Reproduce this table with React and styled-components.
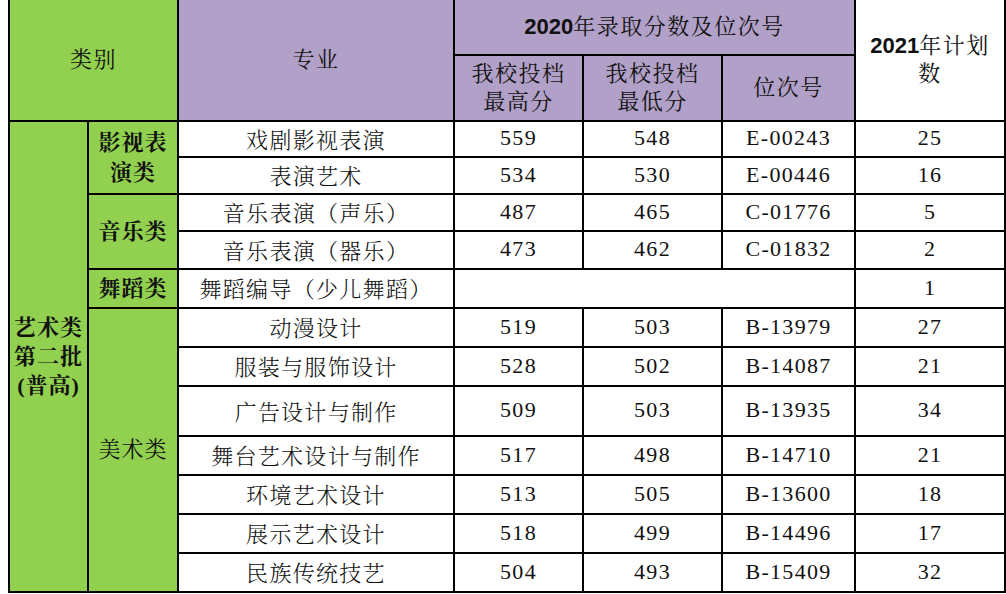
import React from 'react';
import styled, { createGlobalStyle } from 'styled-components';

const GREEN = '#92d050';
const PURPLE = '#b1a0c7';
const LINE = '2px solid #000';

const PageStyle = createGlobalStyle`
  body {
    margin: 0;
    background: #fff;
  }
`;

const Sheet = styled.table`
  margin-left: 8px;
  border-collapse: collapse;
  table-layout: fixed;
  width: 997px;
  color: #111;
  font-family: "Liberation Serif", "Noto Serif CJK SC", "Noto Sans CJK SC", serif;
`;

const Row = styled.tr`
  height: ${({ $h }) => $h}px;
`;

const HeadCell = styled.th`
  border: ${LINE};
  border-top: none;
  padding: 0;
  background: ${({ $tone }) => ($tone === 'green' ? GREEN : $tone === 'purple' ? PURPLE : '#fff')};
  font-size: 22px;
  font-weight: 400;
  line-height: 28px;
  letter-spacing: 1.5px;
  text-align: center;
  vertical-align: middle;
`;

const BoldNum = styled.span`
  font-family: "Liberation Sans", Arial, sans-serif;
  font-weight: 700;
  letter-spacing: 0;
`;

const GroupCell = styled.td`
  border: ${LINE};
  padding: 0;
  background: ${GREEN};
  font-size: 22px;
  font-weight: ${({ $bold }) => ($bold ? 700 : 400)};
  line-height: ${({ $lh }) => $lh || 30}px;
  letter-spacing: 1px;
  text-align: center;
  vertical-align: middle;
`;

const DataCell = styled.td`
  border: ${LINE};
  padding: 0 0 2px;
  background: #fff;
  font-size: 22px;
  font-weight: 300;
  letter-spacing: 1.3px;
  text-align: center;
  vertical-align: middle;
  white-space: nowrap;
`;

const groups = [
  {
    name: ['影视表', '演类'],
    bold: true,
    items: [
      { major: '戏剧影视表演', hi: '559', lo: '548', rank: 'E-00243', plan: '25', h: 36 },
      { major: '表演艺术', hi: '534', lo: '530', rank: 'E-00446', plan: '16', h: 37 },
    ],
  },
  {
    name: ['音乐类'],
    bold: true,
    items: [
      { major: '音乐表演（声乐）', hi: '487', lo: '465', rank: 'C-01776', plan: '5', h: 37 },
      { major: '音乐表演（器乐）', hi: '473', lo: '462', rank: 'C-01832', plan: '2', h: 38 },
    ],
  },
  {
    name: ['舞蹈类'],
    bold: true,
    items: [{ major: '舞蹈编导（少儿舞蹈）', empty: true, plan: '1', h: 39 }],
  },
  {
    name: ['美术类'],
    bold: false,
    items: [
      { major: '动漫设计', hi: '519', lo: '503', rank: 'B-13979', plan: '27', h: 39 },
      { major: '服装与服饰设计', hi: '528', lo: '502', rank: 'B-14087', plan: '21', h: 39 },
      { major: '广告设计与制作', hi: '509', lo: '503', rank: 'B-13935', plan: '34', h: 50 },
      { major: '舞台艺术设计与制作', hi: '517', lo: '498', rank: 'B-14710', plan: '21', h: 39 },
      { major: '环境艺术设计', hi: '513', lo: '505', rank: 'B-13600', plan: '18', h: 39 },
      { major: '展示艺术设计', hi: '518', lo: '499', rank: 'B-14496', plan: '17', h: 39 },
      { major: '民族传统技艺', hi: '504', lo: '493', rank: 'B-15409', plan: '32', h: 39 },
    ],
  },
];

const totalRows = groups.reduce((n, g) => n + g.items.length, 0);

const App = () => {
  let first = true;

  return (
    <>
      <PageStyle />
      <Sheet>
        <colgroup>
          <col style={{ width: 79 }} />
          <col style={{ width: 90 }} />
          <col style={{ width: 276 }} />
          <col style={{ width: 129 }} />
          <col style={{ width: 139 }} />
          <col style={{ width: 133 }} />
          <col style={{ width: 150 }} />
        </colgroup>
        <thead>
          <Row $h={55}>
            <HeadCell $tone="green" colSpan={2} rowSpan={2}>类别</HeadCell>
            <HeadCell $tone="purple" rowSpan={2}>专业</HeadCell>
            <HeadCell $tone="purple" colSpan={3}>
              <BoldNum>2020</BoldNum>年录取分数及位次号
            </HeadCell>
            <HeadCell $tone="white" rowSpan={2}>
              <BoldNum>2021</BoldNum>年计划<br />数
            </HeadCell>
          </Row>
          <Row $h={66}>
            <HeadCell $tone="purple">我校投档<br />最高分</HeadCell>
            <HeadCell $tone="purple">我校投档<br />最低分</HeadCell>
            <HeadCell $tone="purple">位次号</HeadCell>
          </Row>
        </thead>
        <tbody>
          {groups.map((g) =>
            g.items.map((it, i) => {
              const batch = first;
              first = false;
              return (
                <Row key={it.major} $h={it.h}>
                  {batch && (
                    <GroupCell $bold rowSpan={totalRows} $lh={29}>
                      艺术类<br />第二批<br />(普高)
                    </GroupCell>
                  )}
                  {i === 0 && (
                    <GroupCell $bold={g.bold} rowSpan={g.items.length}>
                      {g.name.map((line, k) => (
                        <React.Fragment key={line}>
                          {k > 0 && <br />}
                          {line}
                        </React.Fragment>
                      ))}
                    </GroupCell>
                  )}
                  <DataCell>{it.major}</DataCell>
                  {it.empty ? (
                    <DataCell colSpan={3} />
                  ) : (
                    <>
                      <DataCell>{it.hi}</DataCell>
                      <DataCell>{it.lo}</DataCell>
                      <DataCell>{it.rank}</DataCell>
                    </>
                  )}
                  <DataCell>{it.plan}</DataCell>
                </Row>
              );
            })
          )}
        </tbody>
      </Sheet>
    </>
  );
};

export default App;
